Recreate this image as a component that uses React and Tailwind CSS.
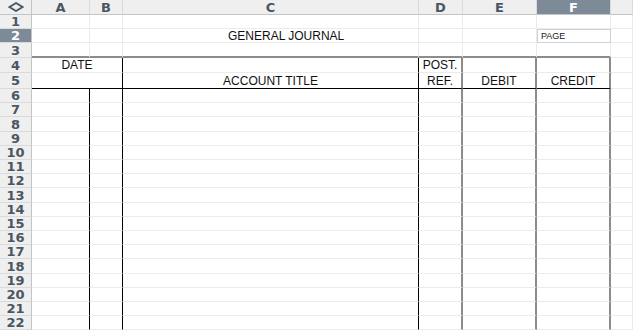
const COLS = [
  { id: "A", w: "w-[58px]" },
  { id: "B", w: "w-[33px]" },
  { id: "C", w: "w-[296px]" },
  { id: "D", w: "w-[44px]" },
  { id: "E", w: "w-[74px]" },
  { id: "F", w: "w-[74px]" },
  { id: "G", w: "w-[22px]" },
];

const ROW_H = {
  1: "h-[14px]", 2: "h-[14px]", 3: "h-[15px]", 4: "h-[15px]", 5: "h-[16px]",
  6: "h-[14px]", 7: "h-[14px]", 8: "h-[15px]", 9: "h-[14px]", 10: "h-[14px]",
  11: "h-[14px]", 12: "h-[14px]", 13: "h-[15px]", 14: "h-[14px]", 15: "h-[14px]",
  16: "h-[14px]", 17: "h-[14px]", 18: "h-[15px]", 19: "h-[14px]", 20: "h-[14px]",
  21: "h-[14px]", 22: "h-[14px]",
};

const ROWS = Array.from({ length: 22 }, (_, i) => i + 1);

// journal ruling: black inner lines, heavy grey outer frame
const rightEdge = (r, c) => {
  if (r >= 4 && (c === "B" || c === "C")) return "border-r-[1.5px] border-r-black";
  if (r >= 6 && c === "A") return "border-r-[1.5px] border-r-black";
  if (r >= 4 && (c === "D" || c === "E" || c === "F")) return "border-r-2 border-r-[#8c8c8c]";
  return "border-r border-r-[#ebebeb]";
};

const bottomEdge = (r, c) => {
  if (c === "G") return "border-b border-b-[#ebebeb]";
  if (r === 3) return "border-b-2 border-b-[#8c8c8c]";
  if (r === 5) return "border-b-[1.5px] border-b-black";
  return "border-b border-b-[#ebebeb]";
};

const TEXT = {
  "2C": "GENERAL JOURNAL",
  "5C": "ACCOUNT TITLE",
  "4D": "POST.",
  "5D": "REF.",
  "5E": "DEBIT",
  "5F": "CREDIT",
};

const headFont = "font-['DejaVu_Sans',sans-serif] font-bold text-[13px] text-[#4a5662]";

function Corner() {
  return (
    <div className="w-[32px] h-[15px] shrink-0 flex items-center justify-center bg-[#efefef] border-r border-r-[#c4c4c4] border-b border-b-[#c4c4c4]">
      <svg width="16" height="10" viewBox="0 0 16 10">
        <polygon points="1.5,5 8,1 14.5,5 8,9" fill="none" stroke="#4a5662" strokeWidth="1.8" />
      </svg>
    </div>
  );
}

function ColumnHeads() {
  return (
    <div className="flex h-[15px]">
      <Corner />
      {COLS.map((c) => (
        <div
          key={c.id}
          className={`${c.w} shrink-0 flex items-center justify-center leading-none border-b border-b-[#c4c4c4] border-r border-r-[#dadada] ${headFont} ${
            c.id === "F" ? "bg-[#7d8b99] text-white" : "bg-[#efefef]"
          }`}
        >
          {c.id === "G" ? "" : c.id}
        </div>
      ))}
    </div>
  );
}

function Cell({ r, c }) {
  const key = `${r}${c.id}`;
  const label = TEXT[key];

  if (key === "2F") {
    return (
      <div className={`${c.w} shrink-0 border border-[#c9d1db] flex items-center pl-[3px] text-[9px] leading-none text-[#222]`}>
        PAGE
      </div>
    );
  }

  return (
    <div
      className={`${c.w} shrink-0 flex items-center leading-none text-[12px] text-[#111] ${rightEdge(r, c.id)} ${bottomEdge(r, c.id)} ${
        key === "2C" ? "justify-start pl-[105px]" : "justify-center"
      }`}
    >
      {label}
    </div>
  );
}

function Row({ r }) {
  const merged = r === 4 || r === 5;
  return (
    <div className={`flex ${ROW_H[r]}`}>
      <div
        className={`w-[32px] shrink-0 flex items-center justify-center leading-none border-r border-r-[#c4c4c4] border-b border-b-[#dadada] ${headFont} ${
          r === 2 ? "bg-[#7d8b99] text-white" : "bg-[#efefef]"
        }`}
      >
        {r}
      </div>
      {merged ? (
        <div
          className={`w-[91px] shrink-0 flex items-center justify-center leading-none text-[12px] text-[#111] border-r-[1.5px] border-r-black ${
            r === 5 ? "border-b-[1.5px] border-b-black" : "border-b border-b-[#ebebeb]"
          }`}
        >
          {r === 4 ? "DATE" : ""}
        </div>
      ) : null}
      {COLS.filter((c) => !(merged && (c.id === "A" || c.id === "B"))).map((c) => (
        <Cell key={c.id} r={r} c={c} />
      ))}
    </div>
  );
}

export default function App() {
  return (
    <div className="w-[633px] h-[330px] overflow-hidden bg-white font-['Liberation_Sans',Arial,sans-serif]">
      <ColumnHeads />
      {ROWS.map((r) => (
        <Row key={r} r={r} />
      ))}
    </div>
  );
}
